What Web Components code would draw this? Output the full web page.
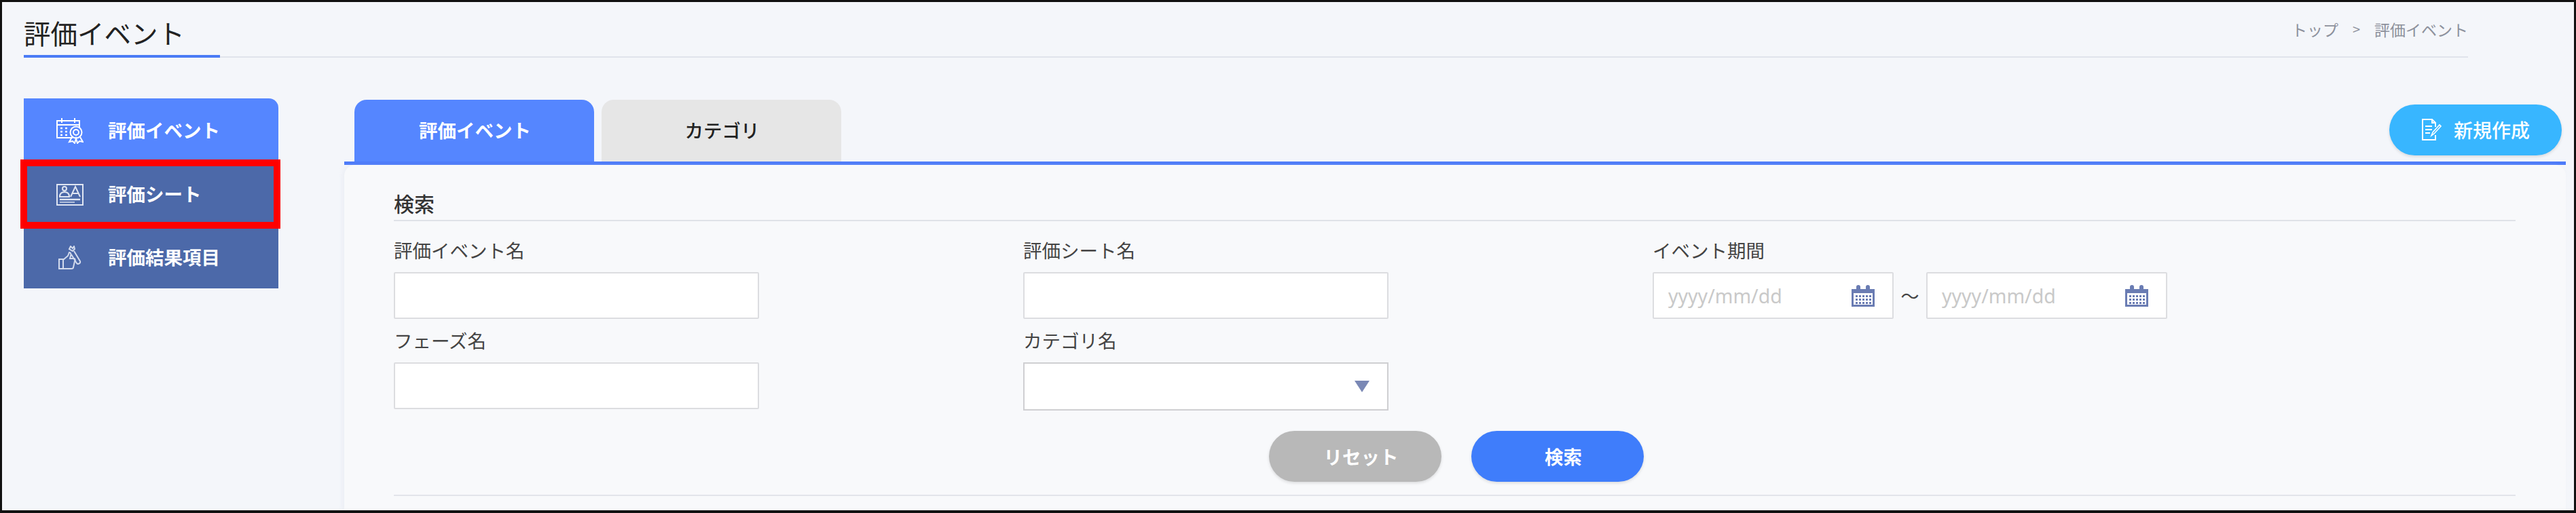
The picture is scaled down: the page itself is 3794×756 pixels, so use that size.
<!DOCTYPE html>
<html lang="ja">
<head>
<meta charset="utf-8">
<title>評価イベント</title>
<style>
  html, body { margin: 0; padding: 0; background: #f4f6fa; }
  body { font-family: "Noto Sans CJK JP", "Noto Sans", sans-serif; color: #333; }
</style>
</head>
<body>

<app-frame>
  <page-header slot="header" heading="評価イベント">
    <span>トップ</span><span class="sep">&gt;</span><span>評価イベント</span>
  </page-header>

  <side-nav slot="nav">
    <nav-item active label="評価イベント">
      <svg slot="icon" width="40" height="40" viewBox="0 0 40 40" fill="none" stroke="#fff" stroke-width="2">
        <path d="M24 31H1V6h33v10"/>
        <path d="M1 12h33M8 2v7M27 2v7" />
        <path d="M6 17h3M13 17h3M6 22h3M13 22h3M6 27h3M13 27h3" stroke-width="2.4"/>
        <circle cx="29" cy="23" r="8.5"/>
        <circle cx="29" cy="23" r="4"/>
        <path d="M23 30l-4 7 5-1 3 3 2-7 2 7 3-3 5 1-4-7"/>
      </svg>
    </nav-item>
    <nav-item label="評価シート">
      <svg slot="icon" width="40" height="32" viewBox="0 0 40 32" fill="none" stroke="#dfe5f2" stroke-width="2">
        <rect x="1" y="1" width="38" height="30"/>
        <circle cx="12" cy="7" r="3"/>
        <path d="M5 19c0-5 3-7 7-7s7 2 7 7z"/>
        <path d="M21 19l7-15 7 15M24 14h8"/>
        <path d="M5 23h30" stroke-width="2.4"/>
        <path d="M5 27h22" stroke-width="1.4"/>
      </svg>
    </nav-item>
    <nav-item label="評価結果項目">
      <svg slot="icon" width="40" height="36" viewBox="0 0 40 36" fill="none" stroke="#d3dbed" stroke-width="2">
        <path d="M4 20h6v14H4zM10 21l7-6 2-5c2 0 3 2 2 5l-1 4h6c2 0 2 3 1 4l-2 9c0 1-1 2-3 2H10"/>
        <path d="M19 5l2-4 3 3 2-3 1 4-3 3zM26 8l9 15c1 3-3 5-5 3l-8-13"/>
      </svg>
    </nav-item>
    <red-frame></red-frame>
  </side-nav>

  <main-content slot="main">
    <tab-bar slot="tabs">
      <tab-item active>評価イベント</tab-item>
      <tab-item>カテゴリ</tab-item>
      <pill-button slot="action" tone="sky">
        <svg slot="icon" width="30" height="32" viewBox="0 0 30 32" fill="none" stroke="#fff" stroke-width="2">
          <path d="M21 12V6l-5-5H2v30h19v-7"/>
          <path d="M16 1v5h5M6 11h10M6 16h10M6 21h7"/>
          <path d="M15 25l2-5 10-11 2 2-10 11z" stroke-width="1.6"/>
        </svg>
        新規作成
      </pill-button>
    </tab-bar>

    <search-panel slot="panel" heading="検索">
      <form-field label="評価イベント名"><text-input></text-input></form-field>
      <form-field label="評価シート名"><text-input></text-input></form-field>
      <form-field label="イベント期間">
        <date-range>
          <date-input>yyyy/mm/dd</date-input>
          <date-input slot="end">yyyy/mm/dd</date-input>
        </date-range>
      </form-field>
      <form-field label="フェーズ名"><text-input></text-input></form-field>
      <form-field label="カテゴリ名"><select-input></select-input></form-field>

      <pill-button slot="actions" tone="grey">リセット</pill-button>
      <pill-button slot="actions" tone="blue">検索</pill-button>
    </search-panel>
  </main-content>
</app-frame>

<script>
const define = (name, html, attrs = []) => {
  customElements.define(name, class extends HTMLElement {
    constructor() {
      super();
      this.attachShadow({ mode: 'open' }).innerHTML = html;
    }
    connectedCallback() {
      attrs.forEach((attr) => {
        this.shadowRoot.querySelector(`#${attr}`).textContent = this.getAttribute(attr) || '';
      });
    }
  });
};

define('app-frame', `
  <style>
    :host {
      display: block;
      box-sizing: border-box;
      width: 3794px;
      height: 756px;
      border: solid #111;
      border-width: 3px 3px 4px 3px;
      background: #f4f6fa;
      padding: 0 12px 0 32px;
      overflow: hidden;
    }
    .header { display: block; margin-right: 144px; }
    .body { display: flex; margin-top: 60px; height: 604px; }
  </style>
  <div class="header"><slot name="header"></slot></div>
  <div class="body">
    <slot name="nav"></slot>
    <slot name="main"></slot>
  </div>
`);

define('page-header', `
  <style>
    :host {
      display: flex;
      justify-content: space-between;
      align-items: flex-start;
      height: 82px;
      box-sizing: border-box;
      border-bottom: 2px solid #e0e4ec;
    }
    #heading {
      box-sizing: border-box;
      width: 289px;
      height: 82px;
      padding-top: 18px;
      border-bottom: 4px solid #4a7bf5;
      font-size: 39.5px;
      line-height: 54px;
      color: #222;
    }
    .crumbs {
      margin-top: 23px;
      font-size: 23px;
      line-height: 34px;
      color: #8d919c;
      display: flex;
    }
    ::slotted(.sep) { margin: 0 21px; font-size: 20px; }
  </style>
  <div id="heading"></div>
  <div class="crumbs"><slot></slot></div>
`, ['heading']);

define('side-nav', `
  <style>
    :host {
      display: grid;
      grid-template-rows: 94px 95px 91px;
      position: relative;
      flex: none;
      width: 375px;
      height: 280px;
    }
  </style>
  <slot></slot>
`);

define('nav-item', `
  <style>
    :host {
      display: flex;
      align-items: center;
      padding-left: 48px;
      background: #4c69a9;
      color: #fff;
      font-size: 27.5px;
      font-weight: 700;
    }
    :host([active]) { background: #5586ff; border-top-right-radius: 14px; }
    .icon { width: 40px; margin-right: 36px; display: flex; justify-content: center; }
    #label { padding-bottom: 3px; }
  </style>
  <div class="icon"><slot name="icon"></slot></div>
  <span id="label"></span>
`, ['label']);

define('red-frame', `
  <style>
    :host {
      position: absolute;
      left: -5px;
      top: 90px;
      width: 383px;
      height: 102px;
      box-sizing: border-box;
      border: 10px solid #ff0000;
    }
  </style>
`);

define('main-content', `
  <style>
    :host { display: block; flex: 1; margin-left: 97px; padding-top: 2px; }
  </style>
  <slot name="tabs"></slot>
  <slot name="panel"></slot>
`);

define('tab-bar', `
  <style>
    :host {
      display: flex;
      gap: 11px;
      height: 96px;
      box-sizing: border-box;
      padding: 0 6px 0 15px;
      border-bottom: 5px solid #4d7bf9;
    }
    .action { margin-left: auto; margin-top: 7px; }
  </style>
  <slot></slot>
  <div class="action"><slot name="action"></slot></div>
`);

define('tab-item', `
  <style>
    :host {
      display: flex;
      align-items: center;
      justify-content: center;
      width: 353px;
      padding: 0 0 3px 2px;
      box-sizing: border-box;
      border-radius: 18px 18px 0 0;
      background: #e6e6e6;
      color: #222;
      font-size: 27.5px;
      font-weight: 500;
    }
    :host([active]) { background: #5586ff; color: #fff; font-weight: 700; }
  </style>
  <slot></slot>
`);

define('pill-button', `
  <style>
    :host {
      display: flex;
      align-items: center;
      justify-content: center;
      gap: 18px;
      box-sizing: border-box;
      width: 254px;
      height: 75px;
      padding-bottom: 2px;
      border-radius: 38px;
      color: #fff;
      font-size: 27.5px;
      font-weight: 700;
      box-shadow: 0 2px 4px rgba(0, 0, 0, 0.12);
    }
    :host([tone="sky"]) { background: #38b6ff; font-size: 28px; font-weight: 500; }
    :host([tone="grey"]) { background: #b8b8b8; }
    :host([tone="blue"]) { background: #3f7dfb; }
    slot[name="icon"] { display: flex; }
  </style>
  <slot name="icon"></slot>
  <slot></slot>
`);

define('search-panel', `
  <style>
    :host {
      display: block;
      height: 509px;
      box-sizing: border-box;
      padding: 38px 74px 0 73px;
      background: #f8f9fb;
      border-radius: 16px 16px 0 0;
      box-shadow: -3px 0 6px rgba(200, 205, 220, 0.18);
    }
    #heading {
      height: 43px;
      border-bottom: 2px solid #dfe2e8;
      font-size: 30px;
      line-height: 37px;
      font-weight: 500;
      color: #333;
    }
    .fields {
      display: grid;
      grid-template-columns: 927px 927px 1fr;
      row-gap: 13px;
      margin-top: 24px;
    }
    .actions {
      display: flex;
      justify-content: center;
      gap: 44px;
      margin-top: 30px;
      padding: 0 0 19px 4px;
      border-bottom: 2px solid #e2e4ea;
    }
  </style>
  <div id="heading"></div>
  <div class="fields"><slot></slot></div>
  <div class="actions"><slot name="actions"></slot></div>
`, ['heading']);

define('form-field', `
  <style>
    :host { display: block; }
    #label {
      height: 40px;
      margin-bottom: 11px;
      font-size: 27.5px;
      line-height: 37px;
      color: #444;
    }
  </style>
  <div id="label"></div>
  <slot></slot>
`, ['label']);

define('text-input', `
  <style>
    :host { display: block; width: 538px; height: 69px; }
    input {
      display: block;
      width: 100%;
      height: 100%;
      box-sizing: border-box;
      margin: 0;
      background: #fff;
      border: 2px solid #dcdde0;
      border-radius: 2px;
      outline: none;
    }
  </style>
  <input type="text">
`);

define('select-input', `
  <style>
    :host { display: block; position: relative; width: 538px; height: 71px; }
    select {
      display: block;
      width: 100%;
      height: 100%;
      box-sizing: border-box;
      margin: 0;
      appearance: none;
      background: #fff;
      border: 2px solid #cfcfd2;
      border-radius: 0;
      outline: none;
    }
    svg { position: absolute; right: 28px; top: 27px; }
  </style>
  <select><option></option></select>
  <svg width="22" height="17" viewBox="0 0 22 17"><path d="M0 0h22L11 17z" fill="#7a88b5"/></svg>
`);

define('date-range', `
  <style>
    :host { display: flex; align-items: center; }
    span { width: 48px; text-align: center; font-size: 27px; color: #444; }
  </style>
  <slot></slot>
  <span>～</span>
  <slot name="end"></slot>
`);

define('date-input', `
  <style>
    :host {
      display: flex;
      align-items: center;
      justify-content: space-between;
      box-sizing: border-box;
      width: 355px;
      height: 69px;
      padding: 0 26px 0 21px;
      background: #fff;
      border: 2px solid #dcdde0;
      border-radius: 2px;
      color: #c9c9c9;
      font-family: "Noto Sans", sans-serif;
      font-size: 28.5px;
    }
    svg { flex: none; }
  </style>
  <slot></slot>
  <svg width="34" height="32" viewBox="0 0 34 32">
    <path d="M0 6h7V3a3 3 0 0 1 6 0v3h8V3a3 3 0 0 1 6 0v3h7v26H0z" fill="#6a7cb3"/>
    <rect x="3" y="12" width="28" height="17" fill="#fff"/>
    <path d="M6 15h3v3H6zM11 15h3v3h-3zM16 15h3v3h-3zM21 15h3v3h-3zM26 15h3v3h-3zM6 20h3v3H6zM11 20h3v3h-3zM16 20h3v3h-3zM21 20h3v3h-3zM26 20h3v3h-3zM6 25h3v3H6zM11 25h3v3h-3zM16 25h3v3h-3zM21 25h3v3h-3zM26 25h3v3h-3z" fill="#6a7cb3"/>
  </svg>
`);
</script>
</body>
</html>
